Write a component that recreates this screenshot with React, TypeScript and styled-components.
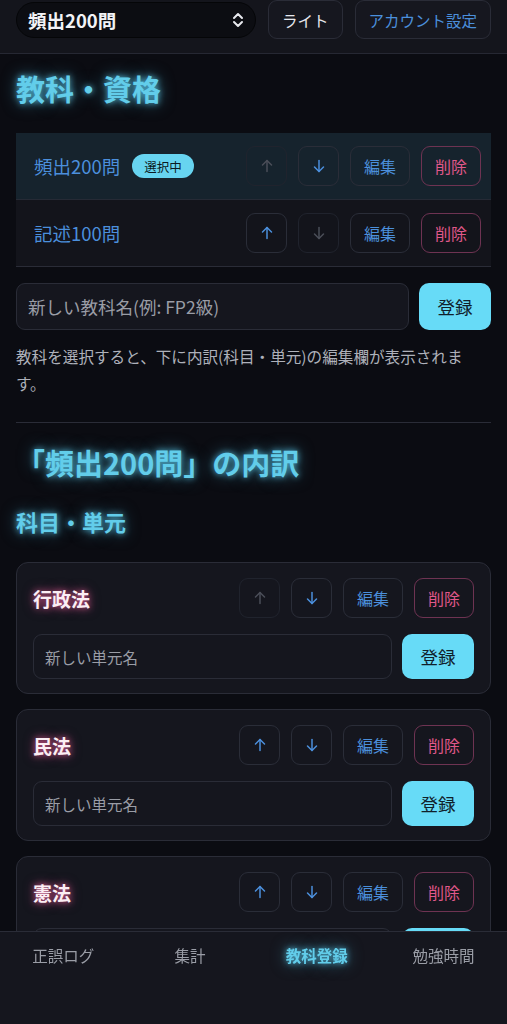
import React from "react";
import styled, { createGlobalStyle, css } from "styled-components";

const Global = createGlobalStyle`
  html, body { margin: 0; padding: 0; background: #0b0c12; }
  body { font-family: "Noto Sans CJK JP", "Noto Sans", sans-serif; color: #e6e8ee; }
  * { box-sizing: border-box; }
`;

const Page = styled.div`
  min-height: 1024px;
  background: #0b0c12;
  padding-bottom: 100px;
`;

const Header = styled.header`
  height: 54px;
  background: #14151c;
  border-bottom: 1px solid #262833;
  display: flex;
  align-items: flex-start;
  padding: 0 16px;
  gap: 12px;
`;

const Select = styled.div`
  margin-top: 2px;
  width: 240px;
  height: 36px;
  border-radius: 18px;
  background: #0c0d12;
  border: 1px solid #050608;
  display: flex;
  align-items: center;
  justify-content: space-between;
  padding: 0 11px 0 11px;
  font-size: 18.5px;
  font-weight: 700;
  color: #f2f3f6;
`;

const HeaderButton = styled.button<{ $accent?: boolean }>`
  height: 39px;
  padding: 0 13px;
  border-radius: 9px;
  background: #16171f;
  border: 1px solid #2a2c37;
  font-family: inherit;
  font-size: 15.5px;
  color: ${(p) => (p.$accent ? "#4b8fdc" : "#e6e8ee")};
`;

const Main = styled.main`
  padding: 0 16px;
`;

const glowCyan = css`
  color: #62cdea;
  text-shadow: 0 0 6px rgba(90, 205, 240, 0.85), 0 0 16px rgba(90, 205, 240, 0.5);
`;

const PageTitle = styled.h1`
  margin: 14px 0 0;
  font-size: 29px;
  line-height: 40px;
  font-weight: 700;
  ${glowCyan}
`;

const SectionTitle = styled.h2`
  margin: 19px 0 0;
  font-size: 29px;
  line-height: 40px;
  font-weight: 700;
  ${glowCyan}
`;

const SubTitle = styled.h3`
  margin: 24px 0 0;
  font-size: 22px;
  line-height: 30px;
  font-weight: 700;
  ${glowCyan}
`;

const List = styled.div`
  margin-top: 25px;
  border-bottom: 1px solid #2a2c37;
`;

const Row = styled.div<{ $selected?: boolean }>`
  height: 66px;
  display: flex;
  align-items: center;
  padding: 0 10px 0 18px;
  background: ${(p) => (p.$selected ? "#16232d" : "#13141b")};
  & + & { border-top: 1px solid #262a35; height: 67px; }
`;

const RowName = styled.span`
  font-size: 18.5px;
  color: #4b8fdc;
`;

const Badge = styled.span`
  margin-left: 12px;
  height: 24px;
  padding: 0 12px;
  border-radius: 12px;
  background: #67d4f0;
  color: #0b1a22;
  font-size: 12.5px;
  display: inline-flex;
  align-items: center;
`;

const Actions = styled.div`
  margin-left: auto;
  display: flex;
  gap: 11px;
`;

const IconBtn = styled.button<{ $disabled?: boolean }>`
  width: 41px;
  height: 40px;
  border-radius: 9px;
  background: transparent;
  border: 1px solid ${(p) => (p.$disabled ? "#20232d" : "#2a2d38")};
  color: ${(p) => (p.$disabled ? "#4a4e58" : "#4b8fdc")};
  display: flex;
  align-items: center;
  justify-content: center;
  padding: 0;
`;

const TextBtn = styled.button<{ $danger?: boolean }>`
  width: 60px;
  height: 40px;
  border-radius: 9px;
  background: transparent;
  border: 1px solid ${(p) => (p.$danger ? "#6e3352" : "#2a2d38")};
  color: ${(p) => (p.$danger ? "#e0588a" : "#4b8fdc")};
  font-family: inherit;
  font-size: 16px;
  padding: 0;
`;

const InputRow = styled.div<{ $mt: number }>`
  display: flex;
  gap: 10px;
  margin-top: ${(p) => p.$mt}px;
`;

const Input = styled.div<{ $h: number; $fs: number }>`
  flex: 1;
  height: ${(p) => p.$h}px;
  border-radius: 9px;
  background: #15161e;
  border: 1px solid #2a2c37;
  display: flex;
  align-items: center;
  padding: 0 11px;
  font-size: ${(p) => p.$fs}px;
  color: #9a9da6;
`;

const Register = styled.button<{ $h: number }>`
  width: 72px;
  height: ${(p) => p.$h}px;
  border-radius: 10px;
  background: #67dbf7;
  border: none;
  color: #10202a;
  font-family: inherit;
  font-size: 17.5px;
`;

const Help = styled.p`
  margin: 13px 0 0;
  font-size: 15.6px;
  line-height: 27px;
  color: #aeb1ba;
`;

const Divider = styled.hr`
  margin: 25px 0 0;
  border: none;
  border-top: 1px solid #2a2c37;
`;

const Cards = styled.div`
  margin-top: 26px;
  display: flex;
  flex-direction: column;
  gap: 15px;
`;

const Card = styled.section`
  border-radius: 12px;
  background: #15161e;
  border: 1px solid #2a2c37;
  padding: 15px 16px 14px 16px;
`;

const CardHead = styled.div`
  display: flex;
  align-items: center;
  height: 40px;
`;

const CardTitle = styled.span`
  font-size: 19px;
  font-weight: 700;
  color: #fbeef4;
  text-shadow: 0 0 6px rgba(230, 90, 150, 0.85), 0 0 12px rgba(230, 90, 150, 0.5);
`;

const Nav = styled.nav`
  position: fixed;
  left: 0;
  right: 0;
  bottom: 0;
  height: 93px;
  background: #15161e;
  border-top: 1px solid #2a2c37;
  display: grid;
  grid-template-columns: repeat(4, 1fr);
  align-items: start;
  padding: 12px 0 0;
`;

const NavItem = styled.span<{ $active?: boolean }>`
  text-align: center;
  font-size: 15.5px;
  line-height: 22px;
  ${(p) =>
    p.$active
      ? css`
          font-weight: 700;
          ${glowCyan}
        `
      : css`
          color: #9a9da6;
        `}
`;

const Arrow = ({ down }: { down?: boolean }) => (
  <svg width="14" height="14" viewBox="0 0 14 14" fill="none" stroke="currentColor" strokeWidth="1.5" strokeLinecap="round" strokeLinejoin="round">
    {down ? (
      <>
        <path d="M7 1.5v11" />
        <path d="M2.5 8l4.5 4.5L11.5 8" />
      </>
    ) : (
      <>
        <path d="M7 12.5v-11" />
        <path d="M2.5 6L7 1.5 11.5 6" />
      </>
    )}
  </svg>
);

const Chevrons = () => (
  <svg width="12" height="16" viewBox="0 0 12 16" fill="none" stroke="#e8e9ee" strokeWidth="2" strokeLinecap="round" strokeLinejoin="round">
    <path d="M2 6l4-4 4 4" />
    <path d="M2 10l4 4 4-4" />
  </svg>
);

type Item = { name: string; upDisabled: boolean; downDisabled: boolean };

const subjects: Item[] = [
  { name: "頻出200問", upDisabled: true, downDisabled: false },
  { name: "記述100問", upDisabled: false, downDisabled: true },
];

const units: Item[] = [
  { name: "行政法", upDisabled: true, downDisabled: false },
  { name: "民法", upDisabled: false, downDisabled: false },
  { name: "憲法", upDisabled: false, downDisabled: false },
];

const ActionGroup = ({ item }: { item: Item }) => (
  <Actions>
    <IconBtn $disabled={item.upDisabled}><Arrow /></IconBtn>
    <IconBtn $disabled={item.downDisabled}><Arrow down /></IconBtn>
    <TextBtn>編集</TextBtn>
    <TextBtn $danger>削除</TextBtn>
  </Actions>
);

export default function App() {
  return (
    <Page>
      <Global />
      <Header>
        <Select>
          <span>頻出200問</span>
          <Chevrons />
        </Select>
        <HeaderButton>ライト</HeaderButton>
        <HeaderButton $accent>アカウント設定</HeaderButton>
      </Header>
      <Main>
        <PageTitle>教科・資格</PageTitle>
        <List>
          {subjects.map((s, i) => (
            <Row key={s.name} $selected={i === 0}>
              <RowName>{s.name}</RowName>
              {i === 0 && <Badge>選択中</Badge>}
              <ActionGroup item={s} />
            </Row>
          ))}
        </List>
        <InputRow $mt={16}>
          <Input $h={47} $fs={17.5}>新しい教科名(例: FP2級)</Input>
          <Register $h={47}>登録</Register>
        </InputRow>
        <Help>教科を選択すると、下に内訳(科目・単元)の編集欄が表示されます。</Help>
        <Divider />
        <SectionTitle>「頻出200問」の内訳</SectionTitle>
        <SubTitle>科目・単元</SubTitle>
        <Cards>
          {units.map((u) => (
            <Card key={u.name}>
              <CardHead>
                <CardTitle>{u.name}</CardTitle>
                <ActionGroup item={u} />
              </CardHead>
              <InputRow $mt={16}>
                <Input $h={45} $fs={15.5}>新しい単元名</Input>
                <Register $h={45}>登録</Register>
              </InputRow>
            </Card>
          ))}
        </Cards>
      </Main>
      <Nav>
        <NavItem>正誤ログ</NavItem>
        <NavItem>集計</NavItem>
        <NavItem $active>教科登録</NavItem>
        <NavItem>勉強時間</NavItem>
      </Nav>
    </Page>
  );
}
